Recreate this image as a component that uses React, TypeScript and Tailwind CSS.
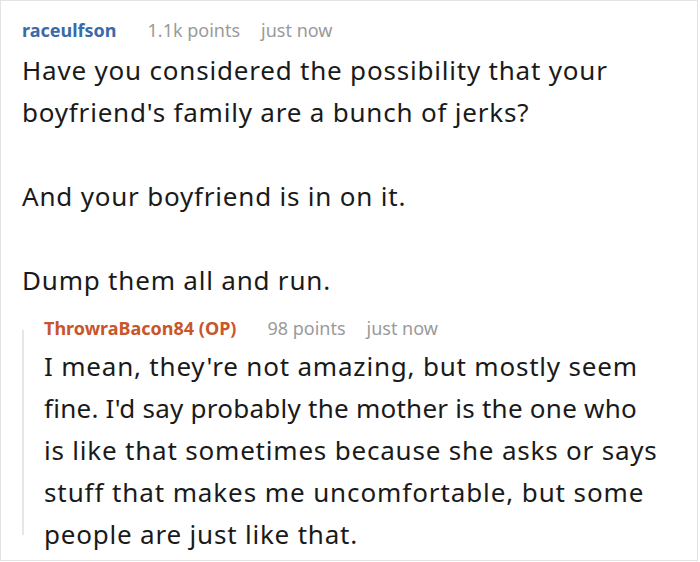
import React from "react";

function Meta({ name, nameClass, points }: { name: string; nameClass: string; points: string }) {
  return (
    <div className="flex items-baseline whitespace-nowrap text-[18px] leading-[24px]">
      <span className={`font-bold ${nameClass}`}>{name}</span>
      <span className="ml-[31px] text-[#9a9a9a]">{points}</span>
      <span className="ml-[21px] text-[#9a9a9a]">just now</span>
    </div>
  );
}

const body = "text-[26px] leading-[42px] tracking-[0.8px] text-[#1a1a1a] whitespace-nowrap";

export default function App() {
  return (
    <div
      className="w-[698px] h-[561px] bg-white border border-[#e3e3e3] overflow-hidden"
      style={{ fontFamily: '"Noto Sans", "Open Sans", sans-serif' }}
    >
      <div className="pl-[21px] pt-[17px]">
        <Meta name="raceulfson" nameClass="text-[#3b6aa8]" points="1.1k points" />
        <div className={`mt-[7px] ${body}`}>
          <p>
            Have you considered the possibility that your
            <br />
            boyfriend's family are a bunch of jerks?
          </p>
          <p className="mt-[42px]">And your boyfriend is in on it.</p>
          <p className="mt-[42px]">Dump them all and run.</p>
        </div>
        <div className="mt-[15px] flex">
          <div className="w-[2px] mt-[14px] mb-[20px] bg-[#e6e6e6]" />
          <div className="pl-[20px]">
            <Meta name="ThrowraBacon84 (OP)" nameClass="text-[#c9562b]" points="98 points" />
            <p className={`mt-[5px] ${body}`}>
              I mean, they're not amazing, but mostly seem
              <br />
              <span className="tracking-[0.25px]">fine. I'd say probably the mother is the one who</span>
              <br />
              is like that sometimes because she asks or says
              <br />
              <span className="tracking-[0.9px]">stuff that makes me uncomfortable, but some</span>
              <br />
              people are just like that.
            </p>
          </div>
        </div>
      </div>
    </div>
  );
}
